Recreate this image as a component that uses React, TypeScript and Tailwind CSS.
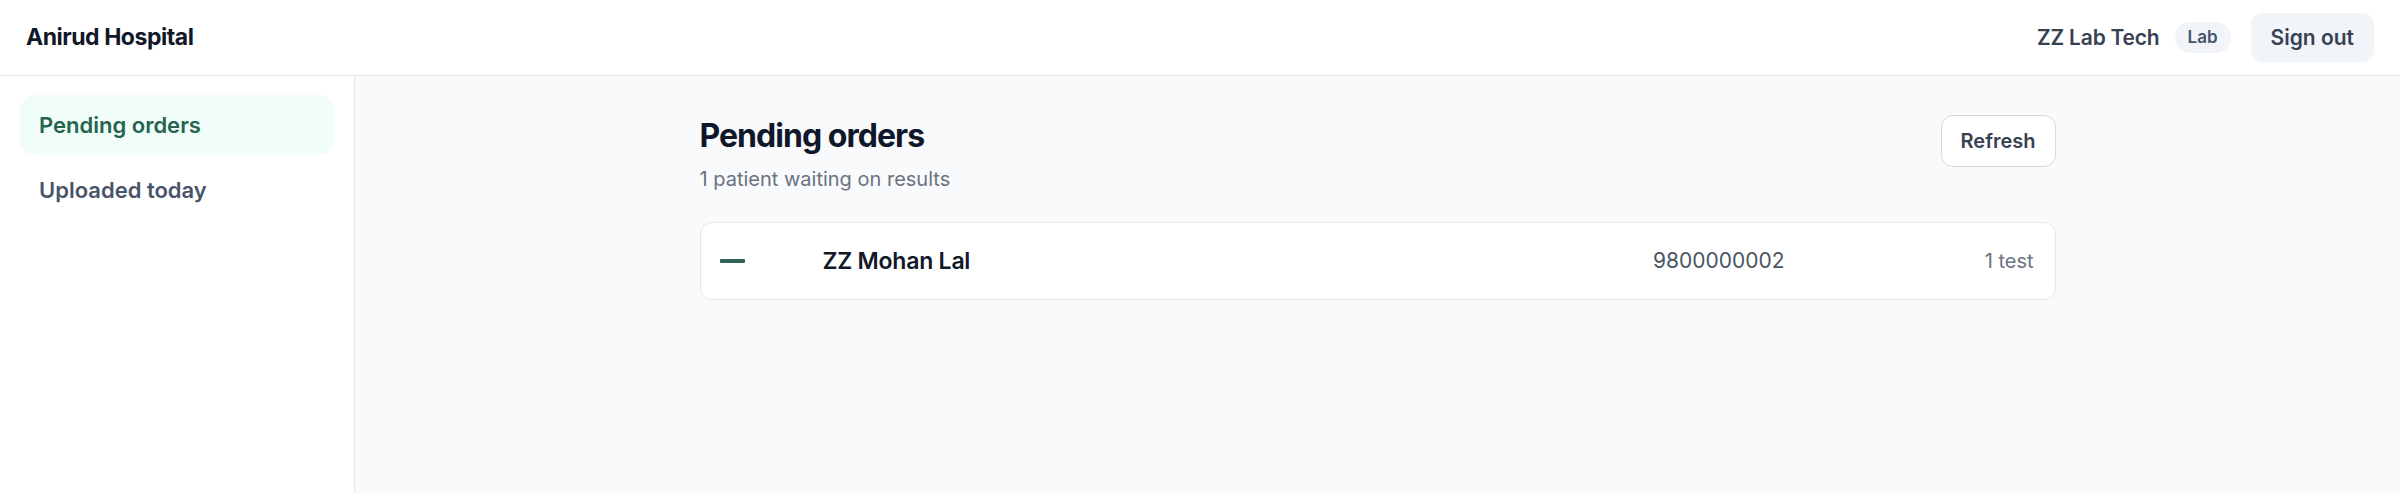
import React from 'react';

const navItems = [
  { label: 'Pending orders', active: true },
  { label: 'Uploaded today', active: false },
];

const orders = [{ id: 1, name: 'ZZ Mohan Lal', phone: '9800000002', tests: 1 }];

export default function App() {
  return (
    <div
      className="flex h-screen flex-col bg-white text-slate-900"
      style={{ fontFamily: 'Inter, "Noto Sans", sans-serif' }}
    >
      <header className="flex h-[76px] shrink-0 items-center justify-between border-b border-[#e5e7eb] bg-white pl-[26px] pr-[26px]">
        <div className="text-[23px] font-bold tracking-[-0.02em] text-[#111827]">Anirud Hospital</div>
        <div className="flex items-center">
          <span className="text-[21px] font-semibold tracking-[-0.01em] text-[#374151]">ZZ Lab Tech</span>
          <span className="ml-[15px] flex h-[31px] items-center rounded-full bg-[#f1f5f9] px-[13px] text-[17px] font-semibold text-[#475569]">
            Lab
          </span>
          <button className="ml-[20px] flex h-[49px] items-center rounded-[12px] bg-[#f1f5f9] px-[20px] text-[21px] font-semibold text-[#374151]">
            Sign out
          </button>
        </div>
      </header>

      <div className="flex min-h-0 flex-1">
        <aside className="flex w-[355px] shrink-0 flex-col gap-[5px] border-r border-[#e5e7eb] bg-white px-[20px] pt-[19px]">
          {navItems.map((item) => (
            <a
              key={item.label}
              className={`flex h-[60px] items-center rounded-[15px] px-[19px] text-[22px] font-semibold ${
                item.active ? 'bg-[#f0fdf8] text-[#26644f]' : 'text-[#475569]'
              }`}
            >
              {item.label}
            </a>
          ))}
        </aside>

        <main className="flex-1 bg-[#f8fafc] pt-[39px]">
          <div className="mx-auto w-[1356px]">
            <div className="flex items-start justify-between">
              <div>
                <h1 className="text-[32px] font-bold leading-[42px] tracking-[-0.03em] text-[#0f172a]">Pending orders</h1>
                <p className="mt-[8px] text-[20px] leading-[28px] text-[#6b7280]">1 patient waiting on results</p>
              </div>
              <button className="flex h-[52px] items-center rounded-[12px] border-[1.5px] border-[#d5dae1] bg-white px-[19px] text-[20px] font-semibold text-[#374151]">
                Refresh
              </button>
            </div>

            <div className="mt-[29px] flex flex-col gap-3">
              {orders.map((o) => (
                <div
                  key={o.id}
                  className="flex h-[78px] items-center rounded-[12px] border border-[#e5e7eb] bg-white pl-[19px] pr-[21px]"
                >
                  <span className="h-[4px] w-[25px] rounded-[1px] bg-[#2d6359]" />
                  <span className="ml-[78px] flex-1 text-[23px] font-semibold tracking-[-0.01em] text-[#111827]">{o.name}</span>
                  <span className="text-[21px] text-[#4b5563]">{o.phone}</span>
                  <span className="w-[249px] text-right text-[20px] text-[#6b7280]">
                    {o.tests} {o.tests === 1 ? 'test' : 'tests'}
                  </span>
                </div>
              ))}
            </div>
          </div>
        </main>
      </div>
    </div>
  );
}
